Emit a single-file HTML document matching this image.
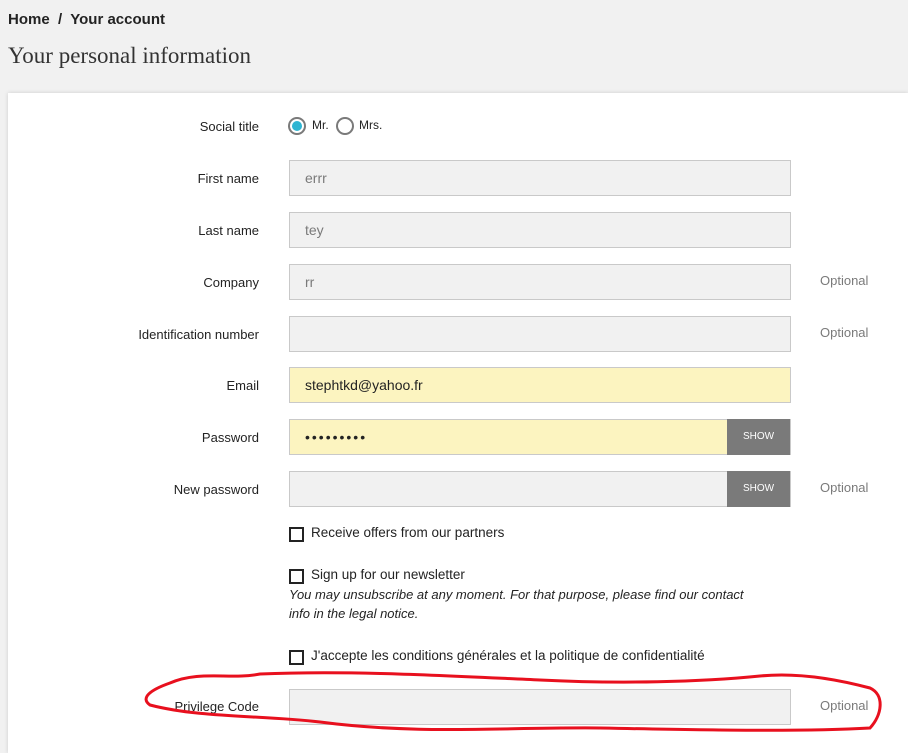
<!DOCTYPE html>
<html><head><meta charset="utf-8"><style>
body{margin:0;width:908px;height:750px;background:#f1f1f1;font-family:"Liberation Sans",sans-serif;position:relative;overflow:hidden;color:#232323}
.a{position:absolute}
.card{left:8px;top:93px;width:900px;height:660px;background:#fff;box-shadow:0 0 4px rgba(0,0,0,.15)}
.lab{position:absolute;right:649px;font-size:13px;color:#232323;text-align:right}
.in{position:absolute;left:289px;height:34px;background:#f1f1f1;border:1px solid #c9c9c9;font-size:14px;color:#7a7a7a;line-height:34px;padding-left:15px;box-sizing:content-box;width:485px}
.opt{position:absolute;left:820px;font-size:13px;color:#7a7a7a}
.show{position:absolute;left:727px;width:63px;height:36px;background:#7a7a7a;color:#fff;font-size:10px;line-height:36px;text-align:center}
.cb{position:absolute;left:289px;width:11px;height:11px;border:2px solid #232323}
.ct{position:absolute;left:311px;font-size:13.5px}
</style></head><body>
<div class="a" style="left:8px;top:11px;font-size:15px;font-weight:bold;color:#232323">Home &nbsp;/&nbsp; Your account</div>
<div class="a" style="left:8px;top:43px;font-size:23px;font-family:'Liberation Serif',serif;color:#333">Your personal information</div>
<div class="a card"></div>
<div class="lab" style="top:119px">Social title</div>
<div class="a" style="left:288px;top:117px;width:14px;height:14px;border:2px solid #7a7a7a;border-radius:50%;background:#fff"><div style="margin:2px;width:10px;height:10px;border-radius:50%;background:#2fb5d2"></div></div>
<div class="a" style="left:312px;top:118px;font-size:12px">Mr.</div>
<div class="a" style="left:336px;top:117px;width:14px;height:14px;border:2px solid #7a7a7a;border-radius:50%"></div>
<div class="a" style="left:359px;top:118px;font-size:12px">Mrs.</div>

<div class="lab" style="top:171px">First name</div><div class="in" style="top:160px">errr</div>
<div class="lab" style="top:223px">Last name</div><div class="in" style="top:212px">tey</div>
<div class="lab" style="top:275px">Company</div><div class="in" style="top:264px">rr</div><div class="opt" style="top:273px">Optional</div>
<div class="lab" style="top:327px">Identification number</div><div class="in" style="top:316px"></div><div class="opt" style="top:325px">Optional</div>
<div class="lab" style="top:378px">Email</div><div class="in" style="top:367px;background:#fcf4c0;color:#232323">stephtkd@yahoo.fr</div>
<div class="lab" style="top:430px">Password</div><div class="in" style="top:419px;background:#fcf4c0;color:#232323;letter-spacing:2px">•••••••••</div><div class="show" style="top:419px">SHOW</div>
<div class="lab" style="top:482px">New password</div><div class="in" style="top:471px"></div><div class="show" style="top:471px">SHOW</div><div class="opt" style="top:480px">Optional</div>
<div class="cb" style="top:527px"></div><div class="ct" style="top:525px">Receive offers from our partners</div>
<div class="cb" style="top:569px"></div><div class="ct" style="top:567px">Sign up for our newsletter</div>
<div class="a" style="left:289px;top:585px;font-size:13px;font-style:italic;line-height:19px;width:520px">You may unsubscribe at any moment. For that purpose, please find our contact<br>info in the legal notice.</div>
<div class="cb" style="top:650px"></div><div class="ct" style="top:648px">J'accepte les conditions générales et la politique de confidentialité</div>
<div class="lab" style="top:699px">Privilege Code</div><div class="in" style="top:689px"></div><div class="opt" style="top:698px">Optional</div>
<svg class="a" style="left:0;top:0" width="908" height="750"><path d="M170,683 C200,670 230,680 260,674 C350,670 450,676 540,680 C620,684 700,682 760,676 C800,672 840,680 870,688 C885,695 882,715 870,728 C800,732 700,730 600,728 C500,727 420,735 320,722 C260,715 200,718 150,705 C140,698 150,690 170,683 Z" fill="none" stroke="#e8101e" stroke-width="3"/></svg>
</body></html>
